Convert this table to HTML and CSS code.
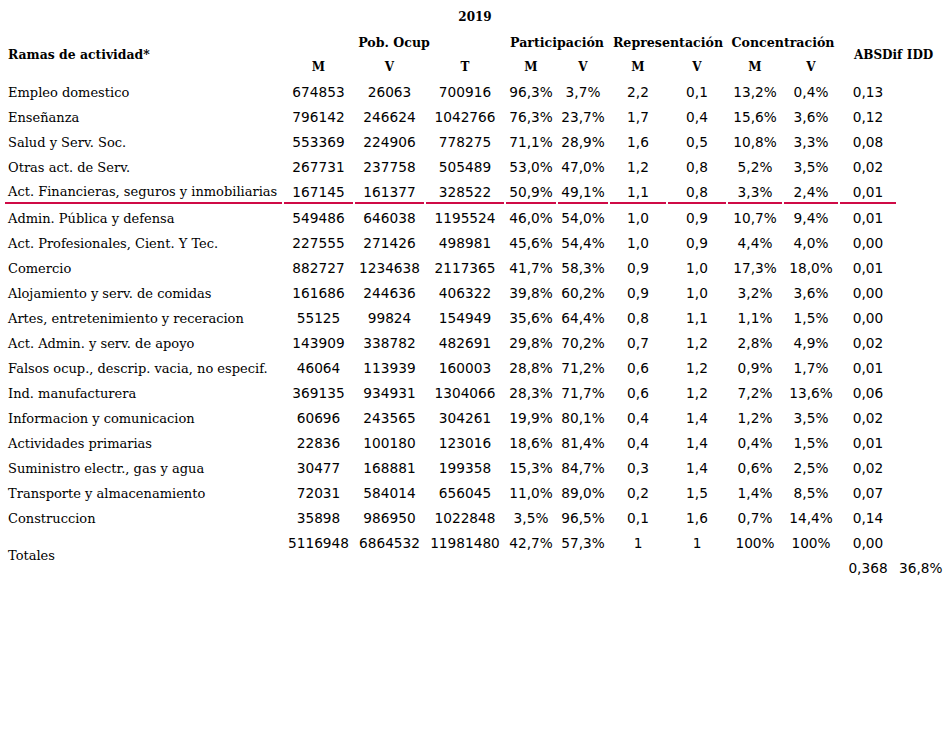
FILE: index.html
```html
<!DOCTYPE html>
<html lang="es">
<head>
<meta charset="utf-8">
<title>Ramas de actividad 2019</title>
<link rel="stylesheet" href="styles.css">
</head>
<body>
<table class="grid">
  <colgroup>
    <col class="c-label"><col class="c-n"><col class="c-n"><col class="c-t">
    <col class="c-p"><col class="c-p"><col class="c-r1"><col class="c-r2">
    <col class="c-c"><col class="c-c"><col class="c-abs"><col class="c-idd">
  </colgroup>
  <thead>
    <tr>
      <th></th>
      <th colspan="6">2019</th>
      <th></th><th></th><th></th><th></th><th></th>
    </tr>
    <tr>
      <th rowspan="2" class="lbl">Ramas de actividad*</th>
      <th colspan="3" class="grp">Pob. Ocup</th>
      <th colspan="2" class="grp">Participación</th>
      <th colspan="2" class="grp">Representación</th>
      <th colspan="2" class="grp">Concentración</th>
      <th rowspan="2" class="abs">ABSDif</th>
      <th rowspan="2">IDD</th>
    </tr>
    <tr>
      <th>M</th><th>V</th><th>T</th>
      <th>M</th><th>V</th>
      <th>M</th><th>V</th>
      <th>M</th><th>V</th>
    </tr>
  </thead>
  <tbody>
    <tr><td class="lbl">Empleo domestico</td><td>674853</td><td>26063</td><td>700916</td><td>96,3%</td><td>3,7%</td><td>2,2</td><td>0,1</td><td>13,2%</td><td>0,4%</td><td>0,13</td><td></td></tr>
    <tr><td class="lbl">Enseñanza</td><td>796142</td><td>246624</td><td>1042766</td><td>76,3%</td><td>23,7%</td><td>1,7</td><td>0,4</td><td>15,6%</td><td>3,6%</td><td>0,12</td><td></td></tr>
    <tr><td class="lbl">Salud y Serv. Soc.</td><td>553369</td><td>224906</td><td>778275</td><td>71,1%</td><td>28,9%</td><td>1,6</td><td>0,5</td><td>10,8%</td><td>3,3%</td><td>0,08</td><td></td></tr>
    <tr><td class="lbl">Otras act. de Serv.</td><td>267731</td><td>237758</td><td>505489</td><td>53,0%</td><td>47,0%</td><td>1,2</td><td>0,8</td><td>5,2%</td><td>3,5%</td><td>0,02</td><td></td></tr>
    <tr class="split"><td class="lbl">Act. Financieras, seguros y inmobiliarias</td><td>167145</td><td>161377</td><td>328522</td><td>50,9%</td><td>49,1%</td><td>1,1</td><td>0,8</td><td>3,3%</td><td>2,4%</td><td>0,01</td><td class="none"></td></tr>
    <tr><td class="lbl">Admin. Pública y defensa</td><td>549486</td><td>646038</td><td>1195524</td><td>46,0%</td><td>54,0%</td><td>1,0</td><td>0,9</td><td>10,7%</td><td>9,4%</td><td>0,01</td><td></td></tr>
    <tr><td class="lbl">Act. Profesionales, Cient. Y Tec.</td><td>227555</td><td>271426</td><td>498981</td><td>45,6%</td><td>54,4%</td><td>1,0</td><td>0,9</td><td>4,4%</td><td>4,0%</td><td>0,00</td><td></td></tr>
    <tr><td class="lbl">Comercio</td><td>882727</td><td>1234638</td><td>2117365</td><td>41,7%</td><td>58,3%</td><td>0,9</td><td>1,0</td><td>17,3%</td><td>18,0%</td><td>0,01</td><td></td></tr>
    <tr><td class="lbl">Alojamiento y serv. de comidas</td><td>161686</td><td>244636</td><td>406322</td><td>39,8%</td><td>60,2%</td><td>0,9</td><td>1,0</td><td>3,2%</td><td>3,6%</td><td>0,00</td><td></td></tr>
    <tr><td class="lbl">Artes, entretenimiento y receracion</td><td>55125</td><td>99824</td><td>154949</td><td>35,6%</td><td>64,4%</td><td>0,8</td><td>1,1</td><td>1,1%</td><td>1,5%</td><td>0,00</td><td></td></tr>
    <tr><td class="lbl">Act. Admin. y serv. de apoyo</td><td>143909</td><td>338782</td><td>482691</td><td>29,8%</td><td>70,2%</td><td>0,7</td><td>1,2</td><td>2,8%</td><td>4,9%</td><td>0,02</td><td></td></tr>
    <tr><td class="lbl">Falsos ocup., descrip. vacia, no especif.</td><td>46064</td><td>113939</td><td>160003</td><td>28,8%</td><td>71,2%</td><td>0,6</td><td>1,2</td><td>0,9%</td><td>1,7%</td><td>0,01</td><td></td></tr>
    <tr><td class="lbl">Ind. manufacturera</td><td>369135</td><td>934931</td><td>1304066</td><td>28,3%</td><td>71,7%</td><td>0,6</td><td>1,2</td><td>7,2%</td><td>13,6%</td><td>0,06</td><td></td></tr>
    <tr><td class="lbl">Informacion y comunicacion</td><td>60696</td><td>243565</td><td>304261</td><td>19,9%</td><td>80,1%</td><td>0,4</td><td>1,4</td><td>1,2%</td><td>3,5%</td><td>0,02</td><td></td></tr>
    <tr><td class="lbl">Actividades primarias</td><td>22836</td><td>100180</td><td>123016</td><td>18,6%</td><td>81,4%</td><td>0,4</td><td>1,4</td><td>0,4%</td><td>1,5%</td><td>0,01</td><td></td></tr>
    <tr><td class="lbl">Suministro electr., gas y agua</td><td>30477</td><td>168881</td><td>199358</td><td>15,3%</td><td>84,7%</td><td>0,3</td><td>1,4</td><td>0,6%</td><td>2,5%</td><td>0,02</td><td></td></tr>
    <tr><td class="lbl">Transporte y almacenamiento</td><td>72031</td><td>584014</td><td>656045</td><td>11,0%</td><td>89,0%</td><td>0,2</td><td>1,5</td><td>1,4%</td><td>8,5%</td><td>0,07</td><td></td></tr>
    <tr><td class="lbl">Construccion</td><td>35898</td><td>986950</td><td>1022848</td><td>3,5%</td><td>96,5%</td><td>0,1</td><td>1,6</td><td>0,7%</td><td>14,4%</td><td>0,14</td><td></td></tr>
    <tr><td class="lbl" rowspan="2">Totales</td><td>5116948</td><td>6864532</td><td>11981480</td><td>42,7%</td><td>57,3%</td><td>1</td><td>1</td><td>100%</td><td>100%</td><td>0,00</td><td></td></tr>
    <tr><td></td><td></td><td></td><td></td><td></td><td></td><td></td><td></td><td></td><td>0,368</td><td>36,8%</td></tr>
  </tbody>
</table>
</body>
</html>
```

FILE: styles.css
```css
html, body {
  margin: 0;
  padding: 0;
  background: #ffffff;
  color: #000000;
}

.grid {
  margin: 3px 0 0 3px;
  border-collapse: separate;
  border-spacing: 2px;
  table-layout: fixed;
  width: 941px;
  font-family: "DejaVu Sans", Verdana, sans-serif;
  font-size: 13.7px;
}

.c-label { width: 277px; }
.c-n { width: 69px; }
.c-t { width: 78px; }
.c-p { width: 50px; }
.c-r1 { width: 56px; }
.c-r2 { width: 58px; }
.c-c { width: 54px; }
.c-abs { width: 56px; }
.c-idd { width: 44px; }

.grid th,
.grid td {
  height: 22px;
  padding: 1px 1px 0;
  text-align: center;
  vertical-align: middle;
  white-space: nowrap;
}

.grid th {
  font-family: "DejaVu Serif", serif;
  font-weight: bold;
  font-size: 12px;
}

.grid th.grp {
  font-size: 12.6px;
}

.grid .lbl {
  text-align: left;
  padding-left: 3px;
  font-family: "DejaVu Serif", serif;
  font-size: 13px;
  font-weight: normal;
}

.grid th.lbl {
  font-weight: bold;
  font-size: 12.4px;
}

.grid th.abs {
  text-align: left;
  padding-left: 14px;
  padding-right: 0;
}

.grid .split td {
  height: 21px;
  border-bottom: 2px solid #cf0a46;
}

.grid .split td.none {
  border-bottom: none;
}
```
